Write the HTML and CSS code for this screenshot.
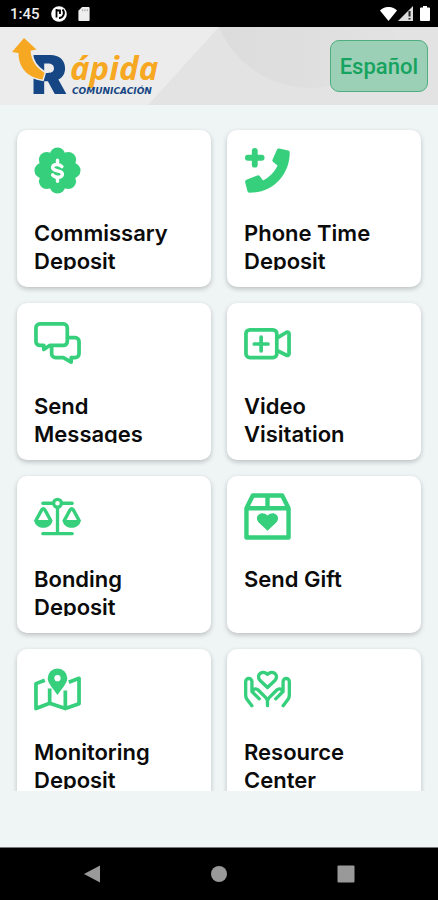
FILE: index.html
```html
<!DOCTYPE html>
<html lang="en">
<head>
<meta charset="utf-8">
<meta name="viewport" content="width=device-width, initial-scale=1">
<title>Rápida Comunicación</title>
<link rel="stylesheet" href="styles.css">
</head>
<body>
<div class="status">
  <span class="clock">1:45</span>
  <svg width="16" height="16" viewBox="0 0 16 16" aria-hidden="true"><circle cx="8" cy="8" r="7.8" fill="#fff"/><path d="M5.500 3v8.500M5.500 4.500h3.500v3.500M11.500 3.500a5 5 0 0 1-3.500 8.500" fill="none" stroke="#000" stroke-width="1.800"/></svg>
  <svg width="12" height="14" viewBox="0 0 12 15" aria-hidden="true"><path d="M4 0h7a1 1 0 0 1 1 1v13a1 1 0 0 1-1 1H1a1 1 0 0 1-1-1V4z" fill="#eee"/><path d="M4.500 2.500v2M7 2.500v2M9.500 2.500v2" stroke="#999" stroke-width="1"/></svg>
  <div class="signals">
    <svg width="17" height="14" viewBox="0 0 17 14" aria-hidden="true"><path d="M0 3.500C4.800-1.200 12.200-1.200 17 3.500L8.500 14z" fill="#fff"/></svg>
    <svg width="15" height="15" viewBox="0 0 15 15" aria-hidden="true"><path d="M15 0v15H0z" fill="#ddd"/><path d="M11.500 5v5.500M11.500 12v1.500" stroke="#222" stroke-width="2"/></svg>
    <svg class="battery" width="10" height="15" viewBox="0 0 10 15" aria-hidden="true"><path d="M3 0h4v1.500h2a1 1 0 0 1 1 1V14a1 1 0 0 1-1 1H1a1 1 0 0 1-1-1V2.500a1 1 0 0 1 1-1h2z" fill="#fff"/></svg>
  </div>
</div>

<header class="header">
  <svg class="backdrop" viewBox="0 0 438 78" preserveAspectRatio="none" aria-hidden="true">
    <defs><linearGradient id="fade" x1="0" x2="1"><stop offset="0" stop-color="#dcdcdc"/><stop offset=".5" stop-color="#dfdfdf"/><stop offset="1" stop-color="#e3e3e3"/></linearGradient></defs>
    <path d="M0 0h438v78H0z" fill="#ececec"/>
    <path d="M219 0h219v78H148z" fill="#e3e3e3"/>
    <circle cx="310" cy="-37" r="98" fill="url(#fade)"/>
  </svg>
  <svg class="logo" width="150" height="60" viewBox="0 0 150 60" role="img" aria-label="Rápida Comunicación">
    <text class="logo-r" x="19" y="58">R</text>
    <path d="M12 2l12.500 11.500-6 1.200c1 9.500 5 16.500 14 22l-2 6.800C15 41.500 6.500 31 6.500 17L0 16z" fill="#f7a823" stroke="#ececec" stroke-width="3" paint-order="stroke"/>
    <text class="logo-name" x="58" y="44">ápida</text>
    <text class="logo-sub" x="60" y="58">COMUNICACIÓN</text>
  </svg>
  <button class="language" type="button">Español</button>
</header>

<main class="content">
  <nav class="grid" aria-label="Services">
    <a class="card" href="#commissary">
      <svg class="icon" viewBox="0 0 48 48" aria-hidden="true"><g fill="#36cf7c"><circle cx="24" cy="24" r="18"/><circle cx="24" cy="8.500" r="8"/><circle cx="35" cy="13" r="8"/><circle cx="39.500" cy="24" r="8"/><circle cx="35" cy="35" r="8"/><circle cx="24" cy="39.500" r="8"/><circle cx="13" cy="35" r="8"/><circle cx="8.500" cy="24" r="8"/><circle cx="13" cy="13" r="8"/></g><path d="M24 13.500v4M24 31v4M28.500 20c-1.500-1.700-2.700-2.200-4.700-2.200-3 0-4.800 1.200-4.800 3.200 0 4.500 10 2.200 10 6.500 0 2.200-2 3.300-5 3.300-2.300 0-4-.6-5-2.300" fill="none" stroke="#fff" stroke-width="3.500" stroke-linecap="round"/></svg>
      <span class="label">Commissary Deposit</span>
    </a>
    <a class="card" href="#phone-time">
      <svg class="icon" viewBox="0 0 48 48" aria-hidden="true"><path d="M11 4v14M4 11h14" stroke="#36cf7c" stroke-width="6" stroke-linecap="round"/><path d="M36 1.500L45 3.500a2 2 0 0 1 1.700 2C46.700 29 29 46.700 5.500 46.700a2 2 0 0 1-2-1.700L1.200 36a2.200 2.200 0 0 1 1.300-2.500l11-4.500a2 2 0 0 1 2.500.6l3.500 4.500A31 31 0 0 0 34.300 19l-4.500-3.600a2.200 2.200 0 0 1-.7-2.500l4.500-10a2.200 2.200 0 0 1 2.400-1.400z" fill="#36cf7c"/></svg>
      <span class="label">Phone Time Deposit</span>
    </a>
    <a class="card" href="#messages">
      <svg class="icon" viewBox="0 -1 48 48" aria-hidden="true"><g fill="none" stroke="#36cf7c" stroke-width="3.800" stroke-linejoin="round"><path d="M6 3h24a4 4 0 0 1 4 4v14a4 4 0 0 1-4 4H16l-6 4V25H6a4 4 0 0 1-4-4V7a4 4 0 0 1 4-4z"/><path d="M34 17h8a4 4 0 0 1 4 4v12.500a4 4 0 0 1-4 4h-4V42L30 37.500H22a4 4 0 0 1-4-4V25"/></g></svg>
      <span class="label">Send Messages</span>
    </a>
    <a class="card" href="#video">
      <svg class="icon" viewBox="0 0 48 48" aria-hidden="true"><g fill="none" stroke="#36cf7c" stroke-width="3.800" stroke-linecap="round" stroke-linejoin="round"><rect x="2" y="10" width="31.500" height="28.500" rx="4"/><path d="M17.500 17.500v14M10.500 24.500h14M33.500 18.500L43.500 12.500a1.700 1.700 0 0 1 2.500 1.500v20.500a1.700 1.700 0 0 1-2.500 1.500L33.500 31"/></g></svg>
      <span class="label">Video Visitation</span>
    </a>
    <a class="card" href="#bonding">
      <svg class="icon" viewBox="0 0 48 48" aria-hidden="true"><g fill="none" stroke="#36cf7c" stroke-width="3.400" stroke-linecap="round" stroke-linejoin="round"><path d="M9 10.500h10M29 10.500h10M24 15v26M9 41.500h30"/><circle cx="24" cy="10.500" r="4"/><path d="M2 28L8 17q1.500-2 3 0L17 28M31 28l6-11q1.500-2 3 0L46 28"/></g><path d="M.3 27.500h18.500c0 4.500-4 8-9.200 8s-9.300-3.500-9.300-8zM29.200 27.500h18.500c0 4.500-4 8-9.200 8s-9.300-3.500-9.300-8z" fill="#36cf7c"/></svg>
      <span class="label">Bonding Deposit</span>
    </a>
    <a class="card" href="#gift">
      <svg class="icon" viewBox="0 0 48 48" aria-hidden="true"><g fill="none" stroke="#36cf7c" stroke-width="4.500" stroke-linejoin="round"><path d="M2.500 15.500h43v30h-43zM2.500 15.500L9 2.500h30L45.500 15.500M24 2.500V15.500"/></g><path d="M24 38.500L14.500 29.500c-4.500-6 3.500-12.500 9.500-6.500 6-6 14 .5 9.500 6.500z" fill="#36cf7c"/></svg>
      <span class="label">Send Gift</span>
    </a>
    <a class="card" href="#monitoring">
      <svg class="icon" viewBox="0 -2 48 48" aria-hidden="true"><path d="M11 12.500L2 16V41.500l14-5.500L32 41.500 46 36.500V10.500L35.500 14.500M16 21v14M32 23v18" fill="none" stroke="#36cf7c" stroke-width="3.800" stroke-linejoin="round"/><path d="M24 27.500C19 20.500 14 15.500 14 10.500a10 10 0 0 1 20 0c0 5-5 10-10 17z" fill="#36cf7c"/><circle cx="24" cy="10.500" r="3.200" fill="#fff"/></svg>
      <span class="label">Monitoring Deposit</span>
    </a>
    <a class="card" href="#resources">
      <svg class="icon" viewBox="0 -2 48 48" aria-hidden="true"><g fill="none" stroke="#36cf7c" stroke-width="3.400" stroke-linecap="round" stroke-linejoin="round"><path d="M24 20l-7.800-7.500c-4.500-5.500 3-11 7.800-6 4.800-5 12.300.5 7.800 6z"/><path d="M8 38.500L3 32q-1.300-2-1.300-4.500V14a3.200 3.200 0 0 1 6.400 0v10l7.500 7.500M8.500 24c1.500-3 4-3.500 6-1.500l7.500 7.500q2 2 2 4V38.500M40 38.500l5-6.500q1.300-2 1.300-4.500V14a3.200 3.200 0 0 0-6.400 0v10L32.400 31.500M39.500 24c-1.500-3-4-3.500-6-1.500l-7.500 7.500q-2 2-2 4"/></g></svg>
      <span class="label">Resource Center</span>
    </a>
  </nav>
</main>

<footer class="navbar">
  <button type="button" aria-label="Back"><svg width="18" height="18" viewBox="0 0 18 18"><path d="M17 .5v17L1 9z" fill="#999"/></svg></button>
  <button type="button" aria-label="Home"><svg width="18" height="18" viewBox="0 0 18 18"><circle cx="9" cy="9" r="8" fill="#999"/></svg></button>
  <button type="button" aria-label="Recent apps"><svg width="18" height="18" viewBox="0 0 18 18"><rect x=".5" y=".5" width="17" height="17" rx="1" fill="#999"/></svg></button>
</footer>
</body>
</html>
```

FILE: styles.css
```css
* {
  box-sizing: border-box;
}

body {
  margin: 0;
  height: 100vh;
  display: flex;
  flex-direction: column;
  background: #eff4f5;
  color: #0b0b0b;
  font-family: Inter, "Liberation Sans", sans-serif;
}

svg {
  display: block;
  flex: none;
}

.status {
  flex: none;
  height: 27px;
  padding: 0 8px 0 10px;
  display: flex;
  align-items: center;
  gap: 11px;
  background: #000;
  color: #eee;
}

.clock {
  font: 500 15px/20px Roboto, sans-serif;
}

.signals {
  margin-left: auto;
  display: flex;
  align-items: center;
  gap: 1px;
}

.battery {
  margin-left: 6px;
}

.header {
  flex: none;
  position: relative;
  height: 78px;
  padding: 0 10px 0 12px;
  display: flex;
  align-items: center;
  justify-content: space-between;
}

.backdrop {
  position: absolute;
  inset: 0;
  width: 100%;
  height: 100%;
}

.logo {
  position: relative;
  overflow: visible;
}

.logo-r {
  font: 900 54px Inter, sans-serif;
  fill: #164683;
}

.logo-name {
  font: italic 700 33px "Open Sans", sans-serif;
  fill: #f7a823;
}

.logo-sub {
  font: italic 700 9px "DejaVu Sans", sans-serif;
  fill: #164683;
}

.language {
  position: relative;
  height: 52px;
  padding: 2px 9px 0;
  border: 1px solid #4fae80;
  border-radius: 9px;
  background: #9bd0b6;
  color: #16a35f;
  font: 500 22px/28px Roboto, sans-serif;
}

.content {
  flex: 1;
  min-height: 0;
  margin-bottom: 56px;
  padding: 25px 17px 0;
  overflow-y: auto;
  scrollbar-width: none;
}

.grid {
  display: grid;
  grid-template-columns: 1fr 1fr;
  gap: 16px;
}

.card {
  height: 157px;
  padding: 17px;
  display: flex;
  flex-direction: column;
  gap: 25px;
  border-radius: 10px;
  background: #fff;
  box-shadow: 0 2px 5px rgba(0, 0, 0, 0.22);
  color: inherit;
  text-decoration: none;
}

.icon {
  width: 47px;
  height: 47px;
}

.label {
  flex: 1;
  min-height: 0;
  overflow: hidden;
  font-size: 22px;
  font-weight: 600;
  line-height: 28px;
}

.navbar {
  flex: none;
  height: 53px;
  padding: 0 29px;
  display: flex;
  align-items: center;
  justify-content: space-around;
  border-top: 1px solid #777;
  background: #000;
}

.navbar button {
  padding: 8px;
  border: 0;
  background: none;
}
```
